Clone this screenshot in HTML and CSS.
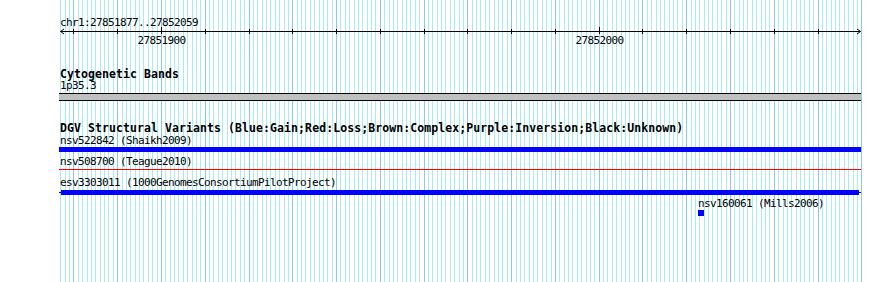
FILE: index.html
```html
<!DOCTYPE html>
<html lang="en">
<head>
  <meta charset="UTF-8" />
  <title>chr1:27851877..27852059</title>
  <link rel="stylesheet" href="styles.css">
</head>
<body>
  <svg class="guides" id="guides" width="890" height="282"></svg>

  <div class="browser">
    <div class="position">chr1:27851877..27852059</div>
    <svg class="ruler" id="ruler" width="801" height="19">
      <line x1="0.5" y1="4.5" x2="800.5" y2="4.5" stroke="#000" />
      <polyline points="4,2 0.5,4.5 4,7" fill="none" stroke="#000" />
      <polyline points="797,2 800.5,4.5 797,7" fill="none" stroke="#000" />
    </svg>

    <div class="track-title">Cytogenetic Bands</div>
    <div class="label">1p35.3</div>
    <div class="band"></div>

    <div class="track-title dgv">DGV Structural Variants (Blue:Gain;Red:Loss;Brown:Complex;Purple:Inversion;Black:Unknown)</div>
    <div class="label first">nsv522842 (Shaikh2009)</div>
    <div class="bar gain"></div>
    <div class="label second">nsv508700 (Teague2010)</div>
    <div class="bar loss"></div>
    <div class="label third">esv3303011 (1000GenomesConsortiumPilotProject)</div>
    <div class="bar extent"><div class="bar-block"></div></div>
    <div class="label small-item">nsv160061 (Mills2006)</div>
    <div class="dot"></div>
  </div>

  <script src="script.js"></script>
</body>
</html>
```

FILE: styles.css
```css
body {
  margin: 0;
  background: #ffffff;
  font-family: "DejaVu Sans Mono", monospace;
  font-size: 11px;
  color: #000;
}
.guides {
  position: absolute;
  left: 0;
  top: 0;
}
.browser {
  position: relative;
  margin-left: 60px;
  width: 801px;
  height: 282px;
}
.position {
  padding-top: 17px;
  height: 10px;
  line-height: 11px;
  letter-spacing: -0.62px;
  white-space: nowrap;
}
.ruler {
  display: block;
  font-family: "DejaVu Sans Mono", monospace;
  font-size: 11px;
  letter-spacing: -0.62px;
}
.track-title {
  margin-top: 22px;
  height: 12px;
  line-height: 12px;
  font-weight: bold;
  font-size: 11.5px;
  letter-spacing: 0.08px;
  white-space: nowrap;
}
.track-title.dgv {
  margin-top: 21px;
}
.label {
  height: 11px;
  line-height: 11px;
  letter-spacing: -0.62px;
  white-space: nowrap;
}
.label.first { margin-top: 1px; }
.label.second { margin-top: 4px; }
.label.third { margin-top: 7px; }
.label.small-item {
  margin-top: 3px;
  margin-left: 638px;
}
.band {
  margin-top: 2px;
  margin-left: -1px;
  width: 802px;
  height: 6px;
  background: #c0c0c0;
  border-top: 1px solid #000;
  border-bottom: 1px solid #000;
}
.bar {
  margin-left: -1px;
  width: 802px;
}
.bar.gain {
  margin-top: 1px;
  height: 5px;
  background: #0000ff;
}
.bar.loss {
  margin-top: 2px;
  height: 1px;
  background: #ff0000;
}
.bar.extent {
  margin-top: 2px;
  height: 5px;
  background: linear-gradient(to bottom, transparent 2px, #0000ff 2px, #0000ff 3px, transparent 3px);
}
.bar-block {
  margin: 0 2px;
  height: 5px;
  background: #0000ff;
}
.dot {
  margin-top: 1px;
  margin-left: 638px;
  width: 6px;
  height: 6px;
  background: #0000ff;
}
```

FILE: script.js
```js
// bases 27851877..27852059 across 801px, one guide per base
const start = 27851877;
const perBase = 4.377;
const ns = "http://www.w3.org/2000/svg";

function baseX(base) {
  return Math.round(60.3 + (base - start) * perBase);
}

function addLine(svg, x, y1, y2, color) {
  const line = document.createElementNS(ns, "line");
  line.setAttribute("x1", x);
  line.setAttribute("x2", x);
  line.setAttribute("y1", y1);
  line.setAttribute("y2", y2);
  line.setAttribute("stroke", color);
  svg.appendChild(line);
}

const guides = document.getElementById("guides");
for (let b = start; b <= 27852060; b++) {
  const color = b % 10 === 0 ? "#8cc6f2" : "#a8ecf0";
  addLine(guides, baseX(b) + 0.5, 0, 282, color);
}

const ruler = document.getElementById("ruler");
for (let b = 27851880; b <= 27852050; b += 10) {
  const x = baseX(b) - 60 + 0.5;
  const major = b % 100 === 0;
  addLine(ruler, x, major ? 0 : 2, 7, "#000");
  if (major) {
    const label = document.createElementNS(ns, "text");
    label.setAttribute("x", x);
    label.setAttribute("y", 17);
    label.setAttribute("text-anchor", "middle");
    label.textContent = b;
    ruler.appendChild(label);
  }
}
```
